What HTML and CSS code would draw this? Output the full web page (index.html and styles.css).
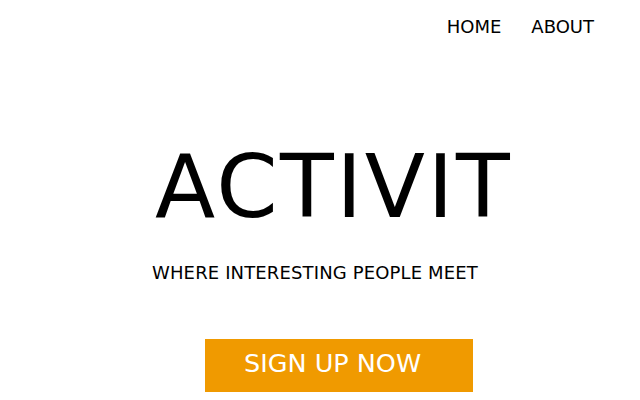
FILE: index.html
```
<!DOCTYPE html>
<html>
<head>
<meta charset="utf-8">
<link rel="stylesheet" href="styles.css">
</head>
<body>
<nav class="nav">
  <a class="nav-link" href="#">HOME</a>
  <a class="nav-link" href="#">ABOUT</a>
</nav>
<main class="hero">
  <h1 class="title">ACTIVIT</h1>
  <p class="tagline">WHERE INTERESTING PEOPLE MEET</p>
  <a class="cta" href="#">SIGN UP NOW</a>
</main>
</body>
</html>
```
FILE: styles.css
```
html, body {
  margin: 0;
  padding: 0;
  background: #ffffff;
}
body {
  font-family: "DejaVu Sans", Verdana, sans-serif;
  color: #000;
}
.nav {
  display: flex;
  justify-content: flex-end;
  gap: 30px;
  padding: 17px 46px 0 0;
  font-size: 18px;
  line-height: 20px;
}
.nav-link {
  color: #000;
  text-decoration: none;
}
.hero {
  display: flex;
  flex-direction: column;
  align-items: flex-start;
  padding-left: 152px;
}
.title {
  margin: 104px 0 0 3px;
  font-size: 88px;
  font-weight: normal;
  line-height: 92px;
  letter-spacing: 2.5px;
}
.tagline {
  margin: 30px 0 0 0;
  font-size: 18px;
  line-height: 20px;
  letter-spacing: 0.14px;
}
.cta {
  margin: 56px 0 0 53px;
  box-sizing: border-box;
  width: 268px;
  height: 53px;
  padding-left: 39px;
  background: #f09a00;
  color: #fff;
  font-size: 25.5px;
  line-height: 48px;
  text-decoration: none;
}
```
